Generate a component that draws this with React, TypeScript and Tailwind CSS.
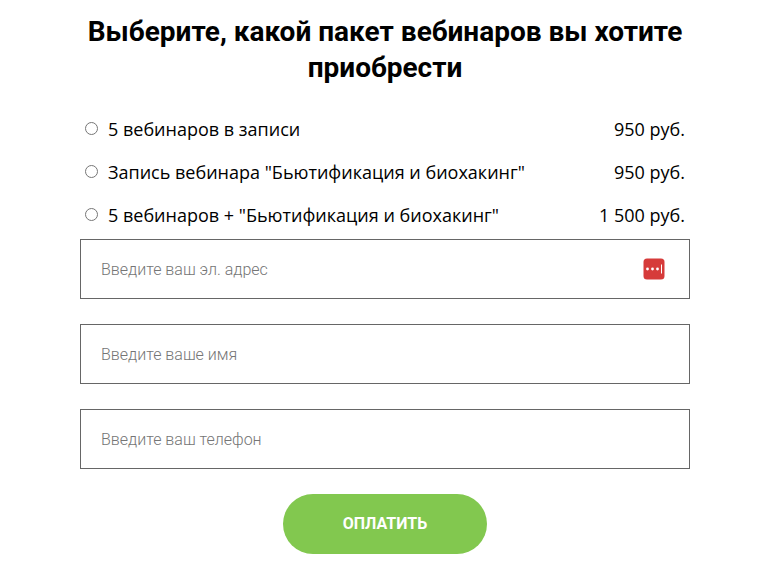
import React, { useState } from 'react';

const packages = [
  { id: 'records', title: '5 вебинаров в записи', price: '950 руб.' },
  { id: 'biohacking', title: 'Запись вебинара "Бьютификация и биохакинг"', price: '950 руб.' },
  { id: 'all', title: '5 вебинаров + "Бьютификация и биохакинг"', price: '1 500 руб.' },
];

const fields = [
  { name: 'email', type: 'email', placeholder: 'Введите ваш эл. адрес' },
  { name: 'name', type: 'text', placeholder: 'Введите ваше имя' },
  { name: 'phone', type: 'tel', placeholder: 'Введите ваш телефон' },
];

function PasswordManagerIcon() {
  return (
    <svg className="absolute top-[19px] right-[25px] h-[22px] w-[22px]" viewBox="0 0 22 22">
      <rect x="0.5" y="0.5" width="21" height="21" rx="3.5" fill="#d63b3a" />
      <circle cx="4.5" cy="11" r="1.4" fill="#fff" />
      <circle cx="9.5" cy="11" r="1.4" fill="#fff" />
      <circle cx="14.5" cy="11" r="1.4" fill="#fff" />
      <rect x="18" y="6.5" width="1" height="9" fill="#fff" />
    </svg>
  );
}

export default function App() {
  const [selected, setSelected] = useState('');

  return (
    <div className="min-h-[570px] bg-white pt-[14px] text-black">
      <form className="ml-20 w-[610px]" onSubmit={e => e.preventDefault()}>
        <h1 className="text-center font-['Roboto',sans-serif] text-[28px] leading-[36px] font-bold">
          Выберите, какой пакет вебинаров вы хотите приобрести
        </h1>

        <div className="mt-[22px] font-['Open_Sans',sans-serif] text-[18px]">
          {packages.map(item => (
            <label key={item.id} className="flex h-[43px] items-center pr-[5px] pl-[5px]">
              <input
                type="radio"
                name="package"
                className="mr-[10px] mb-[2px] h-[13px] w-[13px]"
                checked={selected === item.id}
                onChange={() => setSelected(item.id)}
              />
              <span>{item.title}</span>
              <span className="ml-auto">{item.price}</span>
            </label>
          ))}
        </div>

        <div className="mt-[2px] space-y-[25px]">
          {fields.map(field => (
            <div key={field.name} className="relative">
              <input
                type={field.type}
                name={field.name}
                placeholder={field.placeholder}
                className="block h-[60px] w-full border border-[#666] px-5 font-['Roboto',sans-serif] text-[16px] font-light placeholder:text-[#757575]"
              />
              {field.name === 'email' && <PasswordManagerIcon />}
            </div>
          ))}
        </div>

        <button
          type="submit"
          className="mx-auto mt-[25px] block h-[60px] w-[204px] rounded-full bg-[#82c84f] font-['Roboto',sans-serif] text-[16px] font-bold text-white"
        >
          ОПЛАТИТЬ
        </button>
      </form>
    </div>
  );
}
